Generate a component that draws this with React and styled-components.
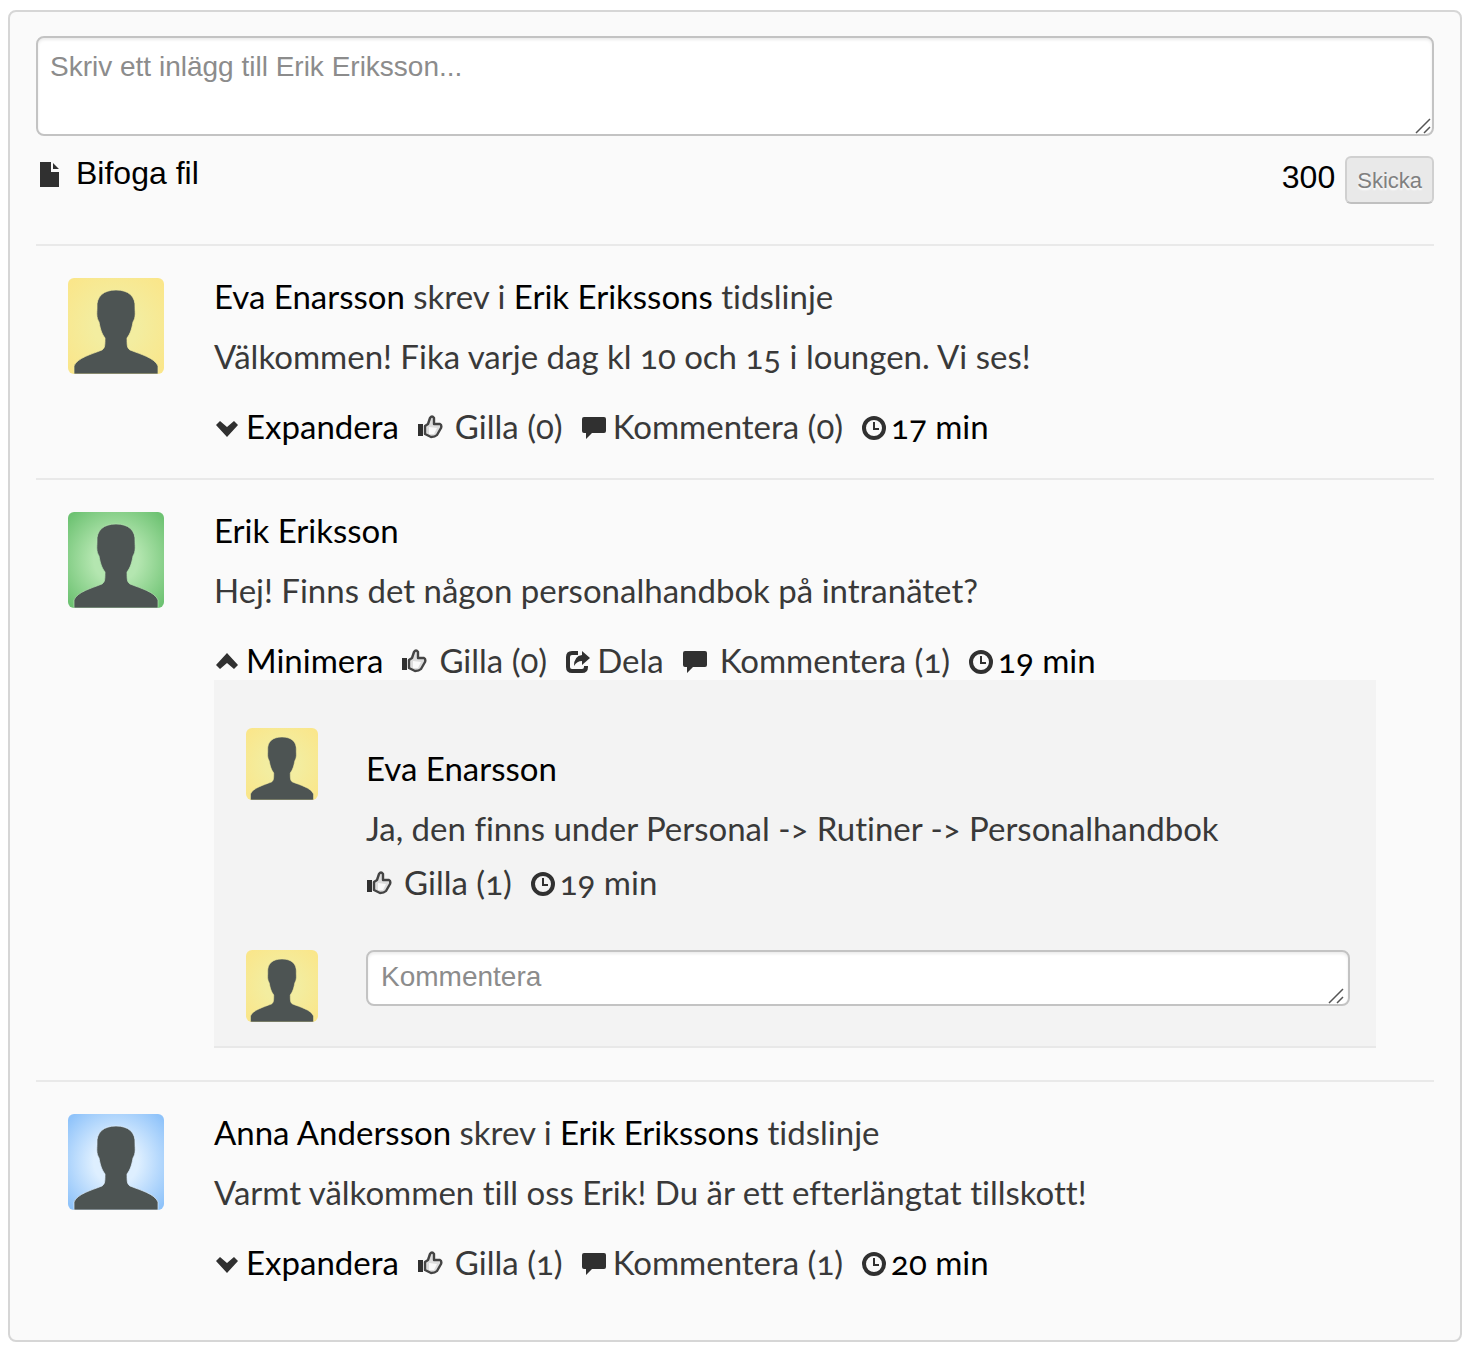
import React from "react";
import styled, { createGlobalStyle } from "styled-components";

const GlobalStyle = createGlobalStyle`
  body {
    margin: 0;
    background: #fff;
    color: #393939;
    font-family: Lato, "Liberation Sans", sans-serif;
    font-size: 33px;
    line-height: 36px;
    font-variant-numeric: oldstyle-nums;
    font-variant-ligatures: no-common-ligatures;
  }

  * {
    box-sizing: border-box;
  }
`;

const Wall = styled.main`
  margin: 10px 8px;
  padding: 24px 26px 26px;
  background: #fafafa;
  border: 2px solid #d6d6d6;
  border-radius: 8px;
`;

const TextBox = styled.textarea`
  display: block;
  width: 100%;
  height: ${(props) => (props.$small ? 56 : 100)}px;
  padding: ${(props) => (props.$small ? "9px 13px" : "13px 12px")};
  border: 2px solid #c3c3c3;
  border-radius: 8px;
  background: #fff;
  box-shadow: inset 0 2px 3px rgba(0, 0, 0, 0.08);
  font-family: "Liberation Sans", sans-serif;
  font-size: 28px;
  line-height: 32px;
  resize: none;
  overflow: hidden;

  &::placeholder {
    color: #8c8c8c;
    opacity: 1;
  }
`;

const Field = styled.div`
  position: relative;
  flex: 1;
`;

const Grip = styled.svg`
  position: absolute;
  right: ${(props) => (props.$small ? 6 : 3)}px;
  bottom: 2px;
  width: 16px;
  height: 16px;
  pointer-events: none;
`;

const Toolbar = styled.div`
  display: flex;
  justify-content: space-between;
  align-items: flex-start;
  padding: 20px 0 40px;
  color: #000;
  font-family: "Liberation Sans", sans-serif;
  font-size: 32px;
`;

const AttachButton = styled.button`
  display: flex;
  align-items: center;
  gap: 14px;
  padding: 0;
  border: 0;
  background: none;
  color: inherit;
  font: inherit;
  line-height: 34px;
`;

const Send = styled.div`
  display: flex;
  align-items: center;
  gap: 10px;
`;

const Counter = styled.output`
  padding-bottom: 6px;
`;

const SendButton = styled.button`
  height: 48px;
  padding: 2px 10px 0;
  border: 2px solid #d0d0d0;
  border-bottom-color: #c0c0c0;
  border-radius: 6px;
  background: #e9e9e9;
  color: #808080;
  font-family: "Liberation Sans", sans-serif;
  font-size: 22px;
  text-shadow: 0 2px 2px #fff;
`;

const PostRow = styled.article`
  display: flex;
  gap: 50px;
  padding: 32px 58px 32px 32px;
  border-top: 2px solid #e9e9e9;
`;

const PostBody = styled.div`
  flex: 1;
`;

const Heading = styled.p`
  margin: 0 0 24px;
`;

const Message = styled.p`
  margin: 0 0 ${(props) => (props.$reply ? 18 : 34)}px;
`;

const Person = styled.a`
  color: #000;
  text-decoration: none;
`;

const Actions = styled.div`
  display: flex;
  flex-wrap: wrap;
  gap: 0 18px;
  padding-bottom: 2px;
`;

const Action = styled.button`
  display: flex;
  align-items: center;
  gap: ${(props) => (props.$wide ? 12 : 6)}px;
  padding: 0;
  border: 0;
  background: none;
  color: ${(props) => (props.$dark ? "#000" : "inherit")};
  font: inherit;
  font-variant: inherit;
`;

const Time = styled(Action).attrs({ as: "time" })`
  gap: 4px;
`;

const Replies = styled.section`
  padding: 48px 26px 24px 32px;
  background: #f3f3f3;
  border-bottom: 2px solid #e8e8e8;
`;

const Reply = styled.div`
  display: flex;
  align-items: flex-start;
  gap: 48px;
`;

const ReplyBody = styled.div`
  flex: 1;
  padding: 22px 0 48px;
`;

const Picture = styled.svg`
  flex: none;
  width: ${(props) => (props.$small ? 72 : 96)}px;
  height: ${(props) => (props.$small ? 72 : 96)}px;
  border-radius: 6px;
`;

const Glyph = styled.svg`
  flex: none;
  width: 26px;
  height: 26px;
  margin-top: 4px;
  color: #303030;
`;

const tints = {
  yellow: ["#f3eda0", "#fae68a"],
  green: ["#b4e6b0", "#6dc272"],
  blue: ["#deefff", "#8fc3fa"],
};

const Avatar = ({ tint, small }) => {
  const id = React.useId();
  const [inner, outer] = tints[tint];
  return (
    <Picture viewBox="0 0 96 96" $small={small} role="img" aria-label="Profilbild">
      <defs>
        <radialGradient id={id} cx="50%" cy="50%" r="66%">
          <stop offset="35%" stopColor={inner} />
          <stop offset="100%" stopColor={outer} />
        </radialGradient>
      </defs>
      <rect width="96" height="96" fill={`url(#${id})`} />
      <path
        d="M6 96V88C9 80 24 76 34 72C37 70 37 67 37 60C33 55 32 49 31 44C28 39 29 35 29 30C28 18 36 12 48 12C60 12 68 18 67 30C67 35 68 39 65 44C64 49 63 55 59 60C59 67 59 70 62 72C72 76 87 80 90 88V96Z"
        fill="#4d5453"
        stroke={inner}
        strokeOpacity="0.7"
      />
    </Picture>
  );
};

const Icon = ({ name }) => (
  <Glyph viewBox="0 0 26 26" aria-hidden="true">
    {name === "file" && (
      <path d="M4 0H15V10H23V25H4ZM17 1L23 7H17Z" fill="currentColor" />
    )}
    {name === "down" && (
      <path d="M6 6L13 12L20 6L24 10L13 22L2 10Z" fill="currentColor" />
    )}
    {name === "up" && (
      <path d="M6 20L13 14L20 20L24 16L13 4L2 16Z" fill="currentColor" />
    )}
    {name === "like" && (
      <>
        <path d="M1 9H6V21H1Z" fill="currentColor" />
        <path
          d="M8 11L11 9L13 3Q15 0 17 3L17 9H23Q25 10 24 13L20 20Q18 22 14 22L8 19Z"
          fill="#ddd"
          stroke="#444"
          strokeWidth="2.4"
          strokeLinejoin="round"
        />
        <path d="M12 12V19H17L20 13Z" fill="#fafafa" />
      </>
    )}
    {name === "comment" && (
      <path
        d="M3 2H23Q25 2 25 4V16Q25 18 23 18H11L5 24V18H3Q1 18 1 16V4Q1 2 3 2Z"
        fill="currentColor"
      />
    )}
    {name === "share" && (
      <>
        <path
          d="M13 4H7Q3 4 3 8V18Q3 22 7 22H17Q21 22 21 18V17"
          fill="none"
          stroke="currentColor"
          strokeWidth="4"
        />
        <path d="M17 2L25 9L17 16V12Q12 12 9 17Q9 7 17 6Z" fill="currentColor" />
      </>
    )}
    {name === "clock" && (
      <g fill="none" stroke="currentColor">
        <circle cx="13" cy="13" r="10" strokeWidth="4" />
        <path d="M13 7V14H18" strokeWidth="2" />
      </g>
    )}
  </Glyph>
);

const Input = ({ label, small }) => (
  <Field>
    <TextBox placeholder={label} aria-label={label} $small={small} />
    <Grip viewBox="0 0 16 16" aria-hidden="true" $small={small}>
      <path d="M1 15L15 1M9 15L15 9" stroke="#555" strokeWidth="1.5" />
    </Grip>
  </Field>
);

const Post = ({ author, tint, target, text, children, likes, comments, time, open }) => (
  <PostRow>
    <Avatar tint={tint} />
    <PostBody>
      <Heading>
        <Person href="#">{author}</Person>
        {target && (
          <>
            {" skrev i "}
            <Person href="#">{target}</Person> tidslinje
          </>
        )}
      </Heading>
      <Message>{text}</Message>
      <Actions>
        <Action $dark aria-expanded={!!open}>
          <Icon name={open ? "up" : "down"} />
          {open ? "Minimera" : "Expandera"}
        </Action>
        <Action $wide>
          <Icon name="like" />
          Gilla ({likes})
        </Action>
        {open && (
          <Action>
            <Icon name="share" />
            Dela
          </Action>
        )}
        <Action $wide={open}>
          <Icon name="comment" />
          Kommentera ({comments})
        </Action>
        <Time $dark>
          <Icon name="clock" />
          {time}
        </Time>
      </Actions>
      {children}
    </PostBody>
  </PostRow>
);

export default () => (
  <Wall>
    <GlobalStyle />
    <Input label="Skriv ett inlägg till Erik Eriksson..." />
    <Toolbar>
      <AttachButton>
        <Icon name="file" />
        Bifoga fil
      </AttachButton>
      <Send>
        <Counter>300</Counter>
        <SendButton disabled>Skicka</SendButton>
      </Send>
    </Toolbar>
    <Post
      author="Eva Enarsson"
      tint="yellow"
      target="Erik Erikssons"
      text="Välkommen! Fika varje dag kl 10 och 15 i loungen. Vi ses!"
      likes={0}
      comments={0}
      time="17 min"
    />
    <Post
      author="Erik Eriksson"
      tint="green"
      text="Hej! Finns det någon personalhandbok på intranätet?"
      likes={0}
      comments={1}
      time="19 min"
      open
    >
      <Replies>
        <Reply>
          <Avatar tint="yellow" small />
          <ReplyBody>
            <Heading>
              <Person href="#">Eva Enarsson</Person>
            </Heading>
            <Message $reply>
              Ja, den finns under Personal -&gt; Rutiner -&gt; Personalhandbok
            </Message>
            <Actions>
              <Action $wide>
                <Icon name="like" />
                Gilla (1)
              </Action>
              <Time>
                <Icon name="clock" />
                19 min
              </Time>
            </Actions>
          </ReplyBody>
        </Reply>
        <Reply>
          <Avatar tint="yellow" small />
          <Input label="Kommentera" small />
        </Reply>
      </Replies>
    </Post>
    <Post
      author="Anna Andersson"
      tint="blue"
      target="Erik Erikssons"
      text="Varmt välkommen till oss Erik! Du är ett efterlängtat tillskott!"
      likes={1}
      comments={1}
      time="20 min"
    />
  </Wall>
);
